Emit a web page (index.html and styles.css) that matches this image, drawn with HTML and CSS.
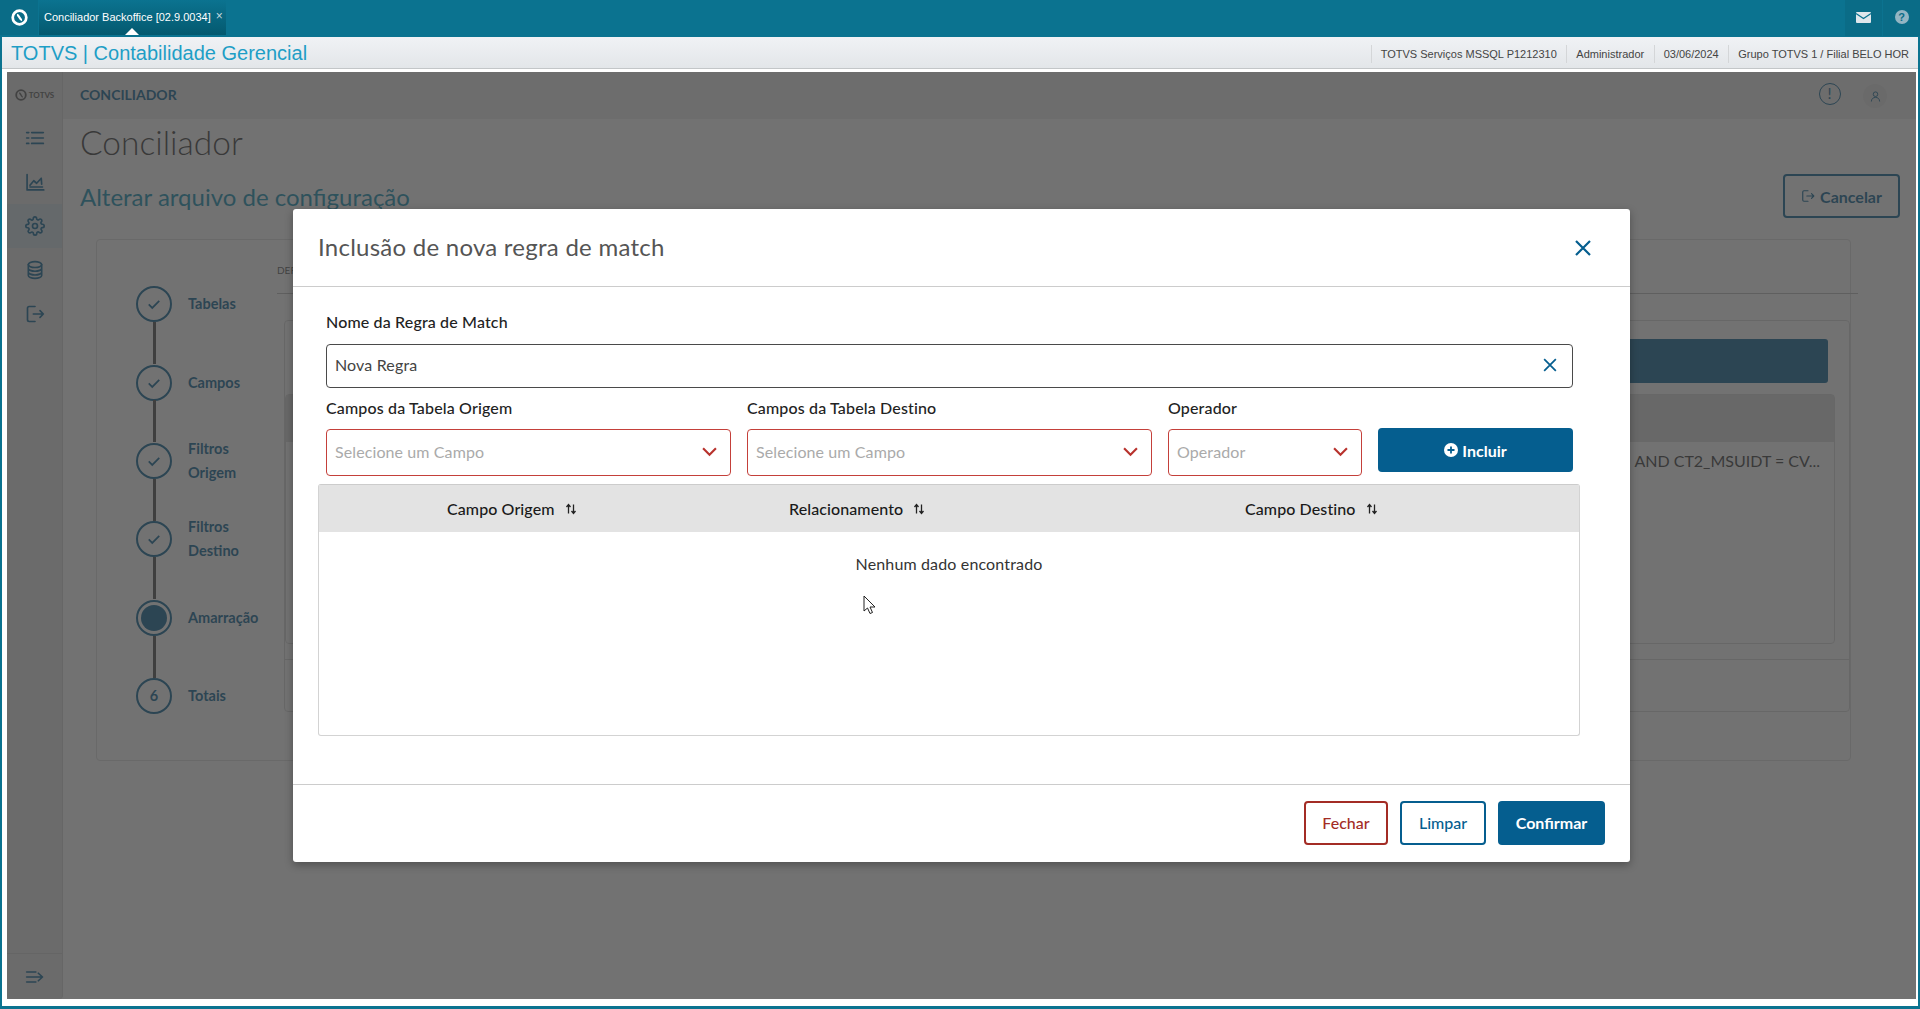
FILE: index.html
```html
<!DOCTYPE html>
<html lang="pt-BR">
<head>
<meta charset="utf-8">
<title>Conciliador Backoffice</title>
<link rel="stylesheet" href="styles.css">
</head>
<body>
<header class="topbar">
  <div class="tile-logo">
    <svg width="17" height="17" viewBox="0 0 20 20"><circle cx="10" cy="10" r="8" fill="none" stroke="#fff" stroke-width="3.200"/><path d="M7 6.800 C9.500 6.800 10.500 13.200 13 13.200" fill="none" stroke="#fff" stroke-width="2.600"/></svg>
  </div>
  <div class="tab">
    <span>Conciliador Backoffice [02.9.0034]</span><span class="tab-x">×</span>
    <i class="tab-pointer"></i>
  </div>
  <div class="top-actions">
    <div class="top-cell">
      <svg width="15" height="11" viewBox="0 0 15 11"><rect width="15" height="11" rx="1" fill="#dfe7ec"/><path d="M0 1.500 L7.500 6.500 L15 1.500" fill="none" stroke="#0b7390" stroke-width="1.200"/></svg>
    </div>
    <div class="top-cell">
      <span class="help">?</span>
    </div>
  </div>
</header>
<div class="subheader">
  <div class="app-name">TOTVS | Contabilidade Gerencial</div>
  <div class="info">
    <span class="info-item">TOTVS Serviços MSSQL P1212310</span>
    <span class="info-item">Administrador</span>
    <span class="info-item">03/06/2024</span>
    <span class="info-item">Grupo TOTVS 1 / Filial BELO HOR</span>
  </div>
</div>
<div class="frame">
  <div class="app">
    <aside class="sidebar">
      <div class="side-logo">
        <svg width="12" height="12" viewBox="0 0 20 20"><circle cx="10" cy="10" r="8" fill="none" stroke="#555" stroke-width="3"/><path d="M7 6.800 C9.500 6.800 10.500 13.200 13 13.200" fill="none" stroke="#555" stroke-width="2.600"/></svg>
        <span>TOTVS</span>
      </div>
      <nav class="side-nav">
        <div class="side-item">
          <svg class="ico" viewBox="0 0 24 24"><path d="M8 5.500h14M8 12h14M8 18.500h14M2 5.500h2.500M2 12h2.500M2 18.500h2.500"/></svg>
        </div>
        <div class="side-item">
          <svg class="ico" viewBox="0 0 24 24"><path d="M2.500 3v18.500H22.500M6 16l4.500-5.500 3.500 3L19.500 7.500l.5 7M6 18h15"/></svg>
        </div>
        <div class="side-item side-active">
          <svg class="ico" viewBox="0 0 24 24"><circle cx="12" cy="12" r="3"/><path d="M19.400 15a1.650 1.650 0 0 0 .33 1.820l.06.06a2 2 0 1 1-2.830 2.830l-.06-.06a1.650 1.650 0 0 0-2.800 1.170V21a2 2 0 1 1-4 0v-.09A1.650 1.650 0 0 0 7.300 19.700l-.06.06a2 2 0 1 1-2.830-2.830l.06-.06a1.650 1.650 0 0 0-1.170-2.800H3a2 2 0 1 1 0-4h.09A1.650 1.650 0 0 0 4.300 7.300l-.06-.06a2 2 0 1 1 2.830-2.830l.06.06a1.650 1.650 0 0 0 2.800-1.170V3a2 2 0 1 1 4 0v.09a1.650 1.650 0 0 0 2.800 1.170l.06-.06a2 2 0 1 1 2.830 2.830l-.06.06a1.650 1.650 0 0 0 1.170 2.800H21a2 2 0 1 1 0 4h-.09a1.650 1.650 0 0 0-1.510 1z"/></svg>
        </div>
        <div class="side-item">
          <svg class="ico" viewBox="0 0 24 24"><ellipse cx="12" cy="5.500" rx="8" ry="3.500"/><path d="M4 5.500v13c0 1.900 3.600 3.500 8 3.500s8-1.600 8-3.500v-13M4 10c0 1.900 3.600 3.500 8 3.500s8-1.600 8-3.500M4 14.500c0 1.900 3.600 3.500 8 3.500s8-1.600 8-3.500"/></svg>
        </div>
        <div class="side-item">
          <svg class="ico" viewBox="0 0 24 24"><path d="M12 3H5a2 2 0 0 0-2 2v14a2 2 0 0 0 2 2h7M10 12h12M18 8l4 4-4 4"/></svg>
        </div>
      </nav>
      <div class="side-foot">
        <svg class="ico" viewBox="0 0 24 24"><path d="M2 6h11M2 12h19M2 18h11M16 7.500l5 4.500-5 4.500"/></svg>
      </div>
    </aside>
    <main class="main">
      <div class="page-top">
        <span class="crumb">CONCILIADOR</span>
        <div class="page-top-icons">
          <span class="alert">!</span>
          <span class="avatar">
            <svg width="11" height="11" viewBox="0 0 12 12"><circle cx="6" cy="3.500" r="2.500" fill="none" stroke="#055e8f" stroke-width="1"/><path d="M1.500 11.500c0-3 2-4.500 4.500-4.500s4.500 1.500 4.500 4.500" fill="none" stroke="#055e8f" stroke-width="1"/></svg>
          </span>
        </div>
      </div>
      <div class="page-body">
        <h1 class="page-title">Conciliador</h1>
        <div class="page-sub-row">
          <h2 class="page-sub">Alterar arquivo de configuração</h2>
          <button class="btn-cancel">
            <svg class="ico-small" viewBox="0 0 24 24"><path d="M12 3H5a2 2 0 0 0-2 2v14a2 2 0 0 0 2 2h7M10 12h12M18 8l4 4-4 4"/></svg>
            Cancelar
          </button>
        </div>
        <section class="wizard">
          <ol class="steps">
            <li class="step"><span class="dot"><svg class="check" viewBox="0 0 16 16"><path d="M2 8.500l4 4 8-8"/></svg></span><span class="step-label">Tabelas</span></li>
            <li class="step"><span class="dot"><svg class="check" viewBox="0 0 16 16"><path d="M2 8.500l4 4 8-8"/></svg></span><span class="step-label">Campos</span></li>
            <li class="step"><span class="dot"><svg class="check" viewBox="0 0 16 16"><path d="M2 8.500l4 4 8-8"/></svg></span><span class="step-label">Filtros<br>Origem</span></li>
            <li class="step"><span class="dot"><svg class="check" viewBox="0 0 16 16"><path d="M2 8.500l4 4 8-8"/></svg></span><span class="step-label">Filtros<br>Destino</span></li>
            <li class="step"><span class="dot dot-active"><i></i></span><span class="step-label">Amarração</span></li>
            <li class="step"><span class="dot dot-num">6</span><span class="step-label">Totais</span></li>
          </ol>
          <div class="wizard-content">
            <div class="tabs"><span>DEFINIÇÃO</span></div>
            <div class="panel">
              <div class="panel-bar"></div>
              <div class="panel-table">
                <div class="panel-head"></div>
                <div class="panel-cell">AND CT2_MSUIDT = CV...</div>
              </div>
              <div class="panel-foot"></div>
            </div>
          </div>
        </section>
      </div>
    </main>
    <div class="overlay"></div>
    <div class="modal">
      <div class="modal-head">
        <h3 class="modal-title">Inclusão de nova regra de match</h3>
        <svg class="modal-close" viewBox="0 0 18 18"><path d="M2 2l14 14M16 2L2 16"/></svg>
      </div>
      <div class="modal-body">
        <label class="label">Nome da Regra de Match</label>
        <div class="input">
          <span>Nova Regra</span>
          <svg class="input-clear" viewBox="0 0 12 12"><path d="M1 1l10 10M11 1L1 11"/></svg>
        </div>
        <div class="fields">
          <div class="field">
            <label class="label">Campos da Tabela Origem</label>
            <div class="select"><span>Selecione um Campo</span><svg class="chev" viewBox="0 0 14 9"><path d="M1 1l6 6 6-6"/></svg></div>
          </div>
          <div class="field">
            <label class="label">Campos da Tabela Destino</label>
            <div class="select"><span>Selecione um Campo</span><svg class="chev" viewBox="0 0 14 9"><path d="M1 1l6 6 6-6"/></svg></div>
          </div>
          <div class="field">
            <label class="label">Operador</label>
            <div class="select"><span>Operador</span><svg class="chev" viewBox="0 0 14 9"><path d="M1 1l6 6 6-6"/></svg></div>
          </div>
          <button class="btn btn-primary btn-add">
            <svg width="14" height="14" viewBox="0 0 14 14"><circle cx="7" cy="7" r="7" fill="#fff"/><path d="M7 3.500v7M3.500 7h7" stroke="#055e8f" stroke-width="1.800"/></svg>
            Incluir
          </button>
        </div>
        <div class="table">
          <div class="table-head">
            <span class="th">Campo Origem <svg class="sort" viewBox="0 0 12 12"><path d="M3.500 10.500V2M1.500 4l2-2.500 2 2.500M8.500 1.500V10M6.500 8l2 2.500 2-2.500"/></svg></span>
            <span class="th">Relacionamento <svg class="sort" viewBox="0 0 12 12"><path d="M3.500 10.500V2M1.500 4l2-2.500 2 2.500M8.500 1.500V10M6.500 8l2 2.500 2-2.500"/></svg></span>
            <span class="th">Campo Destino <svg class="sort" viewBox="0 0 12 12"><path d="M3.500 10.500V2M1.500 4l2-2.500 2 2.500M8.500 1.500V10M6.500 8l2 2.500 2-2.500"/></svg></span>
          </div>
          <div class="table-empty">Nenhum dado encontrado</div>
        </div>
      </div>
      <div class="modal-foot">
        <button class="btn btn-danger">Fechar</button>
        <button class="btn btn-outline">Limpar</button>
        <button class="btn btn-primary">Confirmar</button>
      </div>
    </div>
    <svg class="cursor" width="14" height="20" viewBox="0 0 14 20"><path d="M1 1v15l3.500-3 2.500 5.500 2.500-1-2.500-5.500h5z" fill="#fff" stroke="#222" stroke-width="1"/></svg>
  </div>
</div>
</body>
</html>
```
FILE: styles.css
```css
* { box-sizing: border-box; }
html, body { margin: 0; height: 100%; }
body {
  display: flex;
  flex-direction: column;
  height: 1009px;
  overflow: hidden;
  background: #0b7390;
  font-family: "Lato", "Open Sans", sans-serif;
}
h1, h2, h3, ol { margin: 0; padding: 0; font-weight: 400; }
ol { list-style: none; }
button { font-family: inherit; cursor: pointer; }

/* Top bar */
.topbar {
  height: 37px;
  flex: none;
  display: flex;
  background: #0b7390;
  color: #fff;
  font-family: "Liberation Sans", Arial, sans-serif;
}
.tile-logo {
  width: 38px;
  height: 35px;
  display: flex;
  align-items: center;
  justify-content: center;
  background: #0a6c87;
}
.tab {
  position: relative;
  width: 187px;
  height: 35px;
  margin-left: 1px;
  padding-left: 5px;
  padding-bottom: 1px;
  display: flex;
  align-items: center;
  font-size: 11px;
  background: linear-gradient(#0b7390, #04596f);
  white-space: nowrap;
}
.tab-x { margin-left: 5px; margin-top: -2px; color: #c5d8df; font-size: 12px; }
.tab-pointer {
  position: absolute;
  left: 86px;
  bottom: 0;
  border-left: 7px solid transparent;
  border-right: 7px solid transparent;
  border-bottom: 7px solid #fff;
}
.top-actions { margin-left: auto; display: flex; gap: 1px; }
.top-cell {
  width: 37px;
  height: 36px;
  padding-bottom: 2px;
  display: flex;
  align-items: center;
  justify-content: center;
  background: #0a6c87;
}
.help {
  width: 14px;
  height: 14px;
  border-radius: 50%;
  background: #93b5c3;
  color: #0a6c87;
  font-size: 11px;
  font-weight: 700;
  text-align: center;
  line-height: 14px;
}

/* Sub header */
.subheader {
  height: 32px;
  flex: none;
  margin: 0 2px;
  padding: 2px 9px 0 9px;
  display: flex;
  align-items: center;
  justify-content: space-between;
  background: linear-gradient(#f0f2f5, #e3e6e9);
  border-bottom: 1px solid #c3c6c8;
  font-family: "Liberation Sans", Arial, sans-serif;
}
.app-name { font-size: 20px; color: #1e9ec6; }
.info { display: flex; align-items: center; font-size: 11px; color: #444; }
.info-item {
  padding: 3px 0 3px 9px;
  margin-left: 9.500px;
  border-left: 1px solid #d4d6d8;
  white-space: nowrap;
}

/* Frame */
.frame {
  flex: 1;
  margin: 0 2px 3px;
  padding: 3px 2px 7px 5px;
  background: #fff;
  min-height: 0;
}
.app {
  position: relative;
  height: 100%;
  display: flex;
  background: #fff;
}

/* Sidebar */
.sidebar {
  width: 56px;
  flex: none;
  display: flex;
  flex-direction: column;
  background: #e4e4e4;
  border-right: 1px solid #d3d3d3;
  border-radius: 3px 0 4px 4px;
  color: #055e8f;
}
.side-logo {
  height: 46px;
  display: flex;
  align-items: center;
  justify-content: center;
  gap: 2px;
  font-size: 8px;
  font-weight: 700;
  color: #555;
}
.side-nav { flex: 1; margin-top: -2px; }
.side-item {
  height: 44px;
  display: flex;
  align-items: center;
  justify-content: center;
}
.side-active { background: #cfdde5; }
.side-foot {
  height: 46px;
  display: flex;
  align-items: center;
  justify-content: center;
  border-top: 1px solid #cfcfcf;
}
.ico {
  width: 20px;
  height: 20px;
  fill: none;
  stroke: #055e8f;
  stroke-width: 2;
  stroke-linecap: round;
  stroke-linejoin: round;
}
.ico-small {
  width: 14px;
  height: 14px;
  fill: none;
  stroke: #055e8f;
  stroke-width: 2;
  stroke-linecap: round;
  stroke-linejoin: round;
}

/* Main */
.main { flex: 1; min-width: 0; display: flex; flex-direction: column; background: #fff; }
.page-top {
  height: 47px;
  flex: none;
  padding: 0 29px 2px 17px;
  display: flex;
  align-items: center;
  justify-content: space-between;
  background: #ececec;
}
.crumb { font-size: 14px; font-weight: 700; color: #055e8f; }
.page-top-icons { display: flex; align-items: center; gap: 22.500px; }
.alert {
  width: 22px;
  height: 22px;
  margin-top: -1px;
  border: 1.800px solid #055e8f;
  border-radius: 50%;
  color: #055e8f;
  font-size: 15px;
  line-height: 18px;
  text-align: center;
}
.avatar {
  width: 24px;
  height: 24px;
  margin-top: 3px;
  display: flex;
  align-items: center;
  justify-content: center;
  border-radius: 50%;
  background: #e2e2e2;
}
.page-body { flex: 1; padding: 0 16px 0 17px; min-height: 0; }
.page-title {
  margin-top: 1px;
  font-size: 33.500px;
  line-height: 44px;
  font-weight: 300;
  color: #333;
}
.page-sub-row {
  margin-top: 10px;
  display: flex;
  align-items: center;
  justify-content: space-between;
}
.page-sub { font-size: 24px; color: #0c8cb0; }
.btn-cancel {
  width: 117px;
  height: 44px;
  display: flex;
  align-items: center;
  justify-content: center;
  gap: 5px;
  background: transparent;
  border: 2px solid #055e8f;
  border-radius: 4px;
  color: #055e8f;
  font-size: 16px;
  font-weight: 700;
}

/* Wizard */
.wizard {
  margin-top: 21px;
  margin-left: 16px;
  width: 1755px;
  height: 522px;
  display: flex;
  border: 1px solid #ddd;
  border-radius: 4px;
}
.steps { width: 180px; flex: none; padding: 25px 0 0 39px; }
.step {
  position: relative;
  height: 78.400px;
  display: flex;
  align-items: center;
  gap: 16px;
  font-size: 14.500px;
  font-weight: 700;
  line-height: 24px;
  color: #055e8f;
}
.step:not(:last-child)::after {
  content: "";
  position: absolute;
  left: 17px;
  top: 57px;
  width: 3px;
  height: 42px;
  background: #4a4a4a;
}
.dot {
  width: 36px;
  height: 36px;
  flex: none;
  display: flex;
  align-items: center;
  justify-content: center;
  border: 2px solid #055e8f;
  border-radius: 50%;
}
.dot-num { font-weight: 700; }
.dot-active i {
  width: 26px;
  height: 26px;
  border-radius: 50%;
  background: #055e8f;
}
.check { width: 14px; height: 14px; fill: none; stroke: #055e8f; stroke-width: 2; }
.wizard-content { flex: 1; padding: 24px 0 0 0; min-width: 0; }
.tabs { height: 30px; border-bottom: 1px solid #bbb; font-size: 10px; color: #555; margin-right: -8px; }
.panel {
  position: relative;
  margin-top: 26px;
  height: 392px;
  margin-left: 7px;
  border: 1px solid #d8d8d8;
  border-radius: 4px;
  padding: 18px 21px 0 0;
}
.panel-bar { height: 44px; margin-left: 20px; background: #055e8f; border-radius: 3px; }
.panel-table { margin: 11px -7px 0 0; height: 250px; border: 1px solid #d8d8d8; border-radius: 4px; }
.panel-head { height: 47px; background: #dcdcdc; }
.panel-cell { padding: 9px 14px 0 0; text-align: right; font-size: 16px; color: #333; }
.panel-foot { margin: 15px -21px 0 0; border-top: 1px solid #d8d8d8; }

/* Overlay + modal */
.overlay { position: absolute; inset: 0; background: rgba(60, 60, 60, .72); }
.modal {
  position: absolute;
  left: 286px;
  top: 137px;
  width: 1337px;
  height: 653px;
  display: flex;
  flex-direction: column;
  background: #fff;
  border-radius: 3px;
  box-shadow: 0 3px 8px rgba(0, 0, 0, .3);
}
.modal-head {
  height: 78px;
  flex: none;
  padding: 0 38px 2px 25px;
  display: flex;
  align-items: center;
  justify-content: space-between;
  border-bottom: 1px solid #ccc;
}
.modal-title { font-size: 24px; color: #555; letter-spacing: .250px; }
.modal-close { width: 18px; height: 18px; margin-top: 3px; fill: none; stroke: #055e8f; stroke-width: 2.200; }
.modal-body { flex: 1; padding: 25px 57px 0 33px; min-height: 0; }
.label {
  display: block;
  font-size: 16px;
  line-height: 20px;
  font-weight: 500;
  letter-spacing: .150px;
  color: #222;
}
.input {
  margin-top: 12px;
  height: 44px;
  padding: 0 15px 3px 8px;
  display: flex;
  align-items: center;
  justify-content: space-between;
  border: 1px solid #4a4a4a;
  border-radius: 4px;
  font-size: 16px;
  letter-spacing: .150px;
  color: #444;
}
.input-clear { width: 14px; height: 14px; margin-top: 1px; fill: none; stroke: #055e8f; stroke-width: 1.500; }
.fields {
  margin-top: 10px;
  display: grid;
  grid-template-columns: 405px 405px 194px 195px;
  column-gap: 16px;
  align-items: start;
}
.select {
  margin-top: 11px;
  height: 47px;
  padding: 0 13px 2px 8px;
  display: flex;
  align-items: center;
  justify-content: space-between;
  border: 1px solid #c4403a;
  border-radius: 4px;
  font-size: 16px;
  letter-spacing: .100px;
  color: #aaa;
}
.chev { width: 15px; height: 10px; fill: none; stroke: #b8322d; stroke-width: 2; }
.btn {
  height: 44px;
  padding: 0 16px;
  border-radius: 4px;
  font-size: 16px;
  font-weight: 700;
}
.btn-primary { background: #055e8f; border: 0; color: #fff; }
.btn-add {
  margin-top: 30px;
  display: flex;
  align-items: center;
  justify-content: center;
  gap: 4px;
}
.btn-danger { width: 84px; background: #fff; border: 2px solid #a32c25; color: #a32c25; font-weight: 500; }
.btn-outline { width: 86px; background: #fff; border: 2px solid #055e8f; color: #055e8f; font-weight: 500; }
.modal-foot .btn-primary { width: 107px; }
.table {
  margin: 8px -7px 0 -8px;
  height: 252px;
  border: 1px solid #d3d3d3;
  border-top-color: #ccc;
  border-radius: 3px;
}
.table-head {
  height: 47px;
  padding: 0 0 1px 128px;
  display: grid;
  grid-template-columns: 342px 456px 1fr;
  align-items: center;
  background: #e3e3e3;
}
.th { display: flex; align-items: center; gap: 10px; font-size: 16px; font-weight: 500; letter-spacing: .100px; color: #1a1a1a; }
.sort { width: 12px; height: 12px; margin-top: 2px; fill: none; stroke: #222; stroke-width: 1.300; }
.table-empty { padding-top: 22px; text-align: center; font-size: 16px; line-height: 20px; letter-spacing: .150px; color: #333; }
.modal-foot {
  height: 78px;
  flex: none;
  padding: 0 25px 2px 26px;
  display: flex;
  align-items: center;
  justify-content: flex-end;
  gap: 12px;
  border-top: 1px solid #ccc;
}
.cursor { position: absolute; left: 856px; top: 523px; }
```
